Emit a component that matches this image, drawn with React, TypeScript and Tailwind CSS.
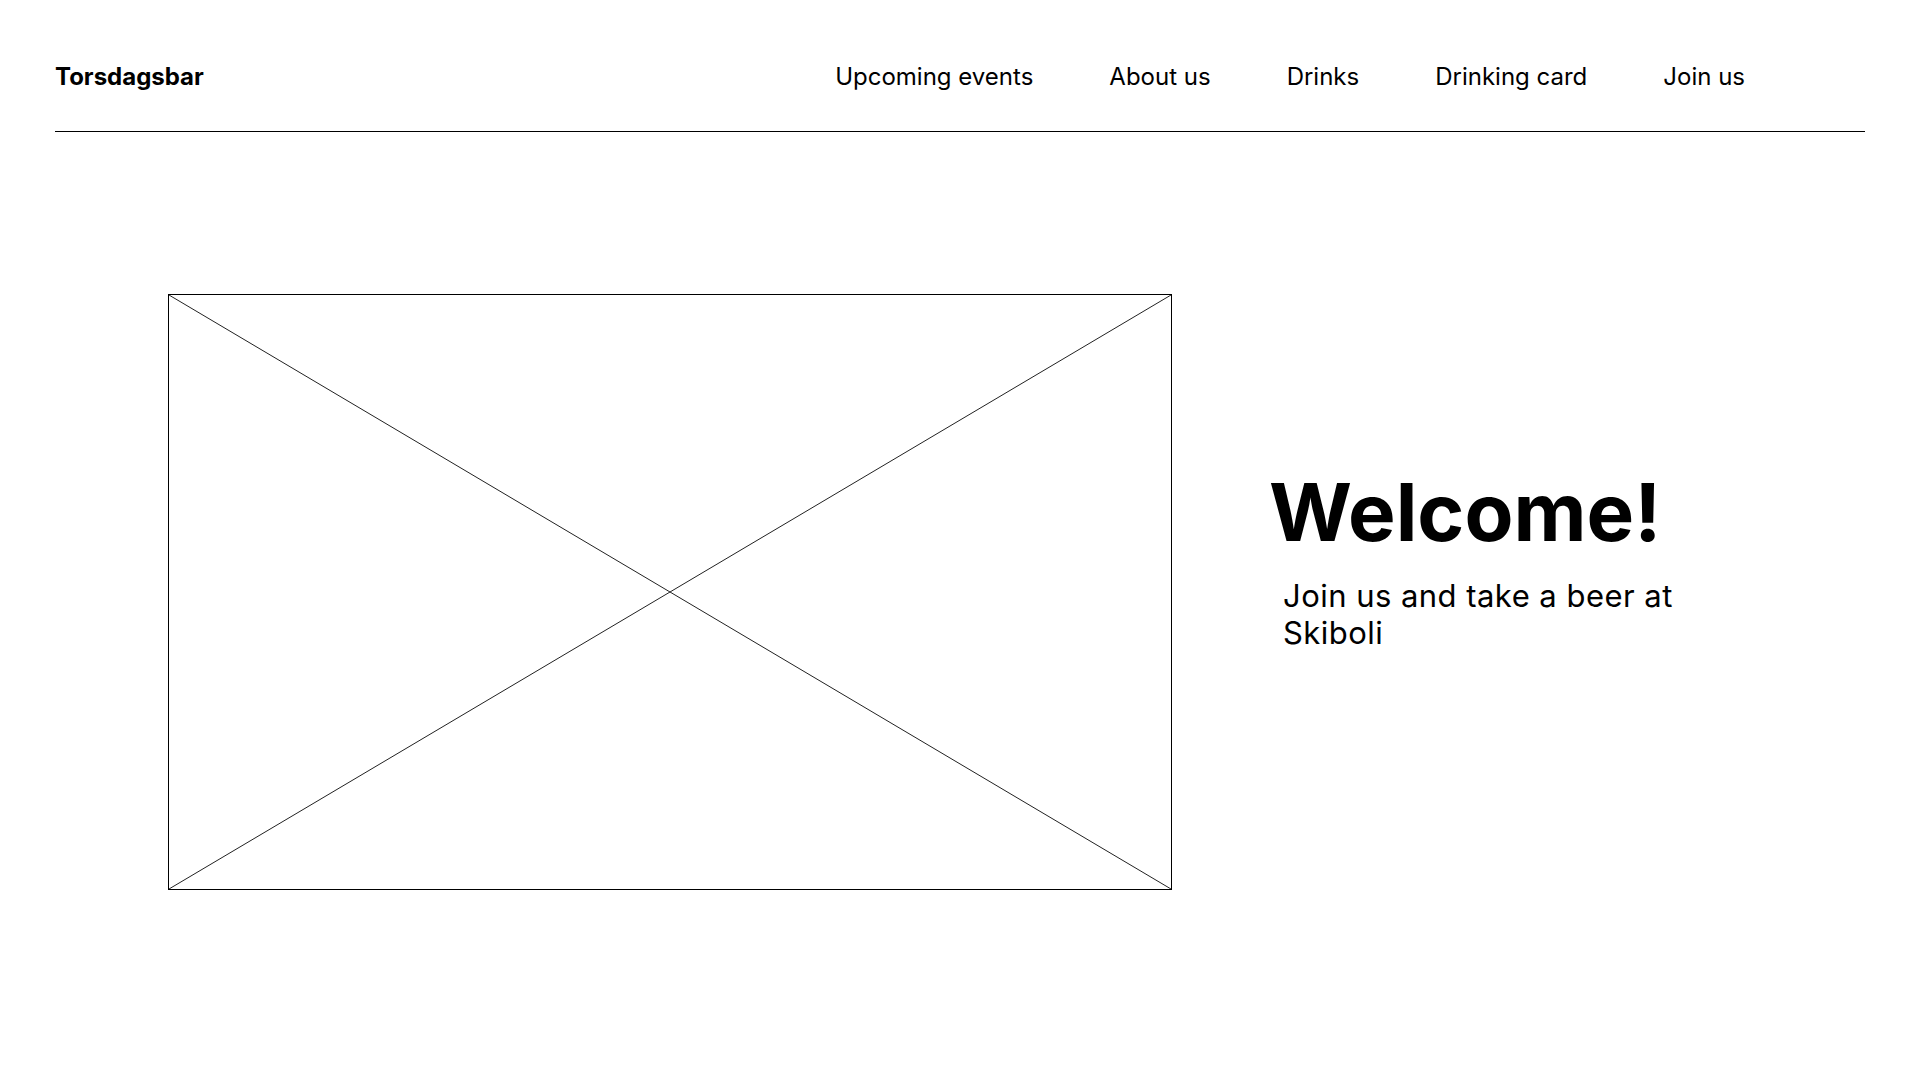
const navItems = ['Upcoming events', 'About us', 'Drinks', 'Drinking card', 'Join us'];

function Placeholder() {
  return (
    <div className="relative w-[1004px] h-[596px] border border-black shrink-0">
      <svg className="absolute inset-0 w-full h-full" preserveAspectRatio="none" viewBox="0 0 100 100">
        <line x1="0" y1="0" x2="100" y2="100" stroke="#222" strokeWidth="1" vectorEffect="non-scaling-stroke" />
        <line x1="0" y1="100" x2="100" y2="0" stroke="#222" strokeWidth="1" vectorEffect="non-scaling-stroke" />
      </svg>
    </div>
  );
}

export default function App() {
  return (
    <div className="min-h-screen w-full bg-white text-black px-[55px] font-['Inter','Liberation_Sans',sans-serif]">
      <header className="flex items-center justify-between pt-[62px] pb-[40px] border-b border-black">
        <a className="text-[24px] leading-[29px] font-bold">Torsdagsbar</a>
        <nav className="flex items-center gap-[76px] pr-[120px]">
          {navItems.map(n => (
            <a key={n} className="text-[24px] leading-[29px] font-normal">{n}</a>
          ))}
        </nav>
      </header>

      <main className="flex items-start gap-[97px] pl-[113px] pt-[162px]">
        <Placeholder />
        <div className="mt-[178px] flex flex-col">
          <h1 className="text-[80px] leading-[80px] font-bold">Welcome!</h1>
          <p className="mt-[25px] ml-[14px] w-[440px] text-[31px] leading-[37px] tracking-[0.015em]">Join us and take a beer at Skiboli</p>
        </div>
      </main>
    </div>
  );
}
